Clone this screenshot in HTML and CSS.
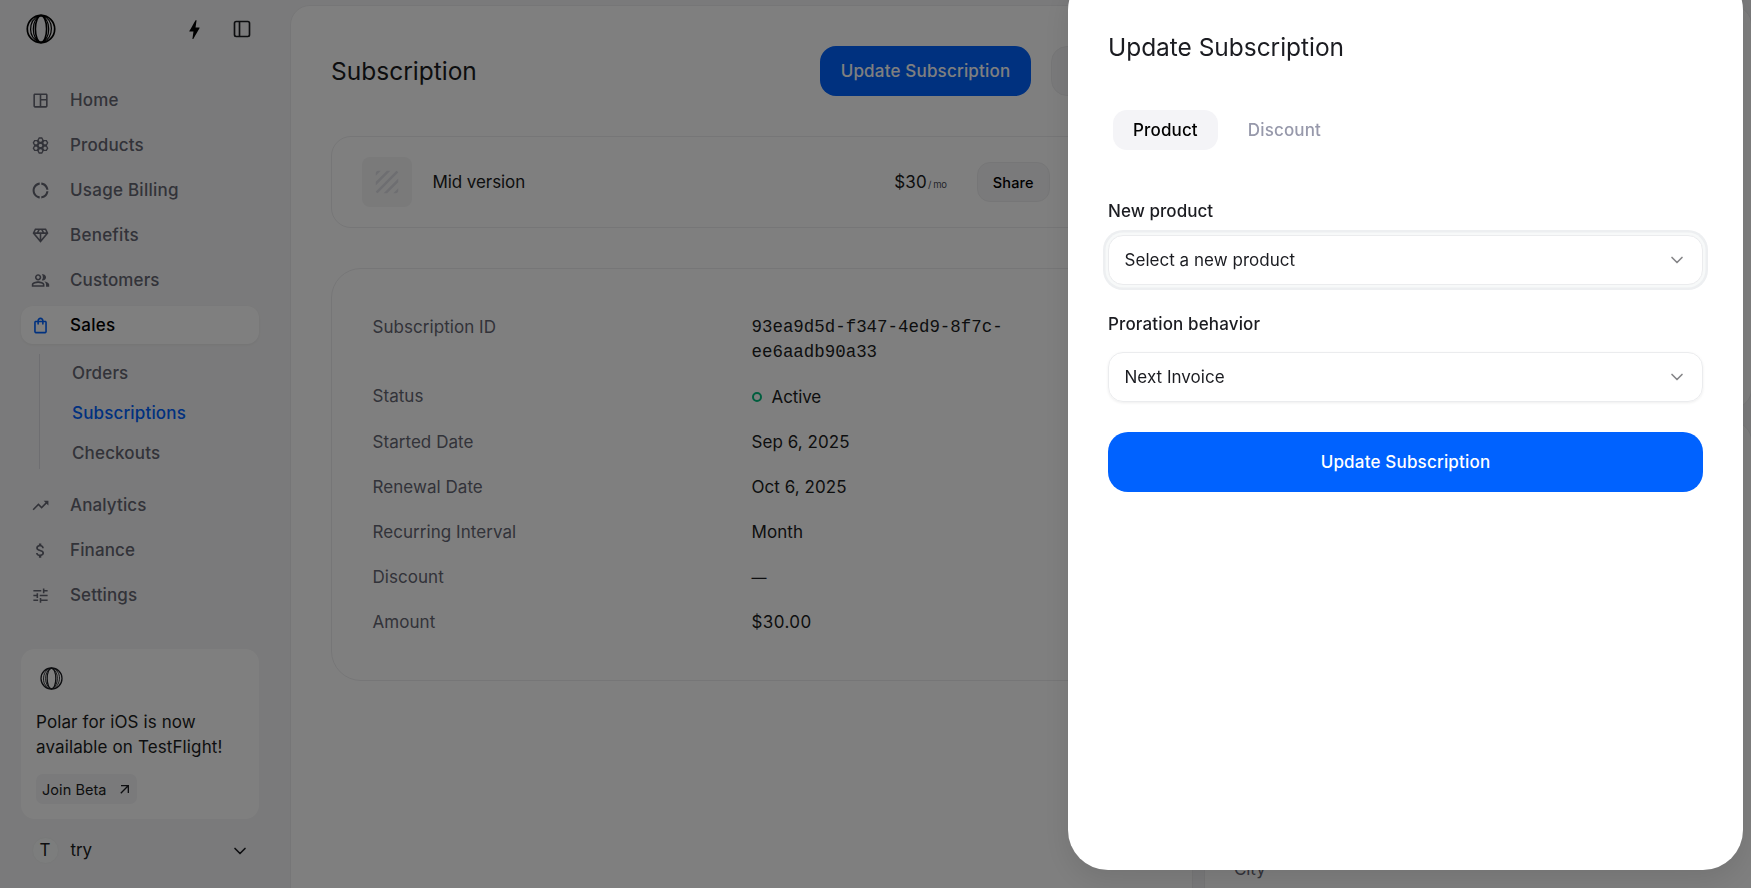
FILE: index.html
```html
<!DOCTYPE html>
<html lang="en">
<head>
<meta charset="utf-8">
<title>Subscription</title>
<link rel="stylesheet" href="styles.css">
</head>
<body>
<svg class="defs" aria-hidden="true">
  <symbol id="logo" viewBox="0 0 30 30">
    <g fill="none" stroke="currentColor">
      <circle cx="15" cy="15" r="13.7" stroke-width="1.7"/>
      <ellipse cx="15" cy="15" rx="5.6" ry="13.6" stroke-width="1.6"/>
      <path d="M13 1.8C7.6 4 4.6 9 4.6 15.600s3.400 10.200 8.400 12.600M15 1.500C10.200 3.600 7.300 8.500 7.300 15S10.200 26.500 15 28.500" stroke-width="1.2"/>
      <path d="M17 1.800C22.400 4 25.400 8.500 25.400 14.400s-3 11.400-8.400 13.800M15 1.500C19.800 3.600 22.700 8.500 22.700 15S19.800 26.500 15 28.500" stroke-width="1.2"/>
    </g>
  </symbol>
  <symbol id="chevron" viewBox="0 0 24 24"><path d="m6 9 6 6 6-6" fill="none" stroke="currentColor" stroke-width="2" stroke-linecap="round" stroke-linejoin="round"/></symbol>
</svg>

<div class="app">
  <aside class="sidebar">
    <header class="side-top">
      <svg class="brand"><use href="#logo"/></svg>
      <div class="side-tools">
        <svg class="bolt" viewBox="0 0 24 24" fill="currentColor"><path d="M11 21h-1l1-7H7.500c-.58 0-.57-.32-.38-.66.19-.34.05-.08.07-.12C8.480 10.940 10.420 7.540 13 3h1l-1 7h3.500c.49 0 .56.33.47.51l-.07.15C12.960 17.550 11 21 11 21z"/></svg>
        <svg class="toggle" viewBox="0 0 24 24" fill="none" stroke="currentColor" stroke-width="2"><rect x="3" y="3" width="18" height="18" rx="2"/><path d="M9 3v18"/></svg>
      </div>
    </header>

    <nav class="nav">
      <a class="nav-item"><svg viewBox="0 0 24 24"><path d="M19 3H5c-1.100 0-2 .9-2 2v14c0 1.100.9 2 2 2h14c1.100 0 2-.9 2-2V5c0-1.100-.9-2-2-2zM5 19V5h6v14H5zm14 0h-6v-7h6v7zm0-9h-6V5h6v5z"/></svg>Home</a>
      <a class="nav-item"><svg class="line" viewBox="0 0 24 24"><path d="M10.400 2.500h3.200l1.600 2.800-1.600 2.800h-3.200L8.800 5.300zM10.400 9.200h3.200l1.600 2.800-1.600 2.800h-3.200L8.800 12zM10.400 15.900h3.200l1.600 2.800-1.600 2.800h-3.200l-1.600-2.800zM4.600 5.800h3.200l1.600 2.800-1.600 2.800H4.600L3 8.600zM4.600 12.600h3.200l1.600 2.800-1.600 2.800H4.600L3 15.400zM16.200 5.800h3.200L21 8.600l-1.600 2.800h-3.200l-1.600-2.800zM16.200 12.600h3.200l1.600 2.800-1.600 2.800h-3.200l-1.600-2.800z"/></svg>Products</a>
      <a class="nav-item wide"><svg viewBox="0 0 24 24"><path d="M11 4.600V2c-5 .5-9 4.810-9 10s4 9.500 9 10v-2.600c-3.500-.48-6.400-3.600-6.400-7.400s2.900-6.920 6.400-7.400zM19.400 11H22c-.47-5-4-8.530-9-9v2.600c3.400.43 5.970 3 6.400 6.400zM13 19.400V22c5-.47 8.530-4 9-9h-2.600c-.43 3.400-3 5.970-6.400 6.400z"/></svg>Usage Billing</a>
      <a class="nav-item wide"><svg viewBox="0 0 24 24"><path d="M19 3H5L2 9l10 12L22 9l-3-6zM9.620 8l1.500-3h1.760l1.500 3H9.620zM11 10v6.680L5.440 10H11zm2 0h5.560L13 16.680V10zm6.260-2h-2.650l-1.500-3h2.650l1.500 3zM6.240 5h2.650l-1.500 3H4.740l1.500-3z"/></svg>Benefits</a>
      <a class="nav-item"><svg viewBox="0 0 24 24"><path d="M16.670 13.130C18.040 14.060 19 15.320 19 17v3h4v-3c0-2.180-3.570-3.470-6.330-3.870zM15 12c2.210 0 4-1.790 4-4s-1.790-4-4-4c-.47 0-.91.1-1.330.24C14.500 5.270 15 6.580 15 8s-.5 2.730-1.330 3.760c.42.14.86.24 1.330.24zM9 12c2.210 0 4-1.790 4-4s-1.790-4-4-4-4 1.790-4 4 1.790 4 4 4zm0-6c1.100 0 2 .9 2 2s-.9 2-2 2-2-.9-2-2 .9-2 2-2zm0 7c-2.670 0-8 1.340-8 4v3h16v-3c0-2.660-5.330-4-8-4zm6 5H3v-.99C3.200 16.290 6.300 15 9 15s5.800 1.290 6 2v1z"/></svg>Customers</a>
      <a class="nav-item wide active"><svg viewBox="0 0 24 24"><path d="M18 6h-2c0-2.210-1.790-4-4-4S8 3.790 8 6H6c-1.100 0-2 .9-2 2v12c0 1.100.9 2 2 2h12c1.100 0 2-.9 2-2V8c0-1.100-.9-2-2-2zm-6-2c1.100 0 2 .9 2 2h-4c0-1.100.9-2 2-2zm6 16H6V8h2v2c0 .55.45 1 1 1s1-.45 1-1V8h4v2c0 .55.45 1 1 1s1-.45 1-1V8h2v12z"/></svg>Sales</a>
      <div class="subnav">
        <a>Orders</a>
        <a class="current">Subscriptions</a>
        <a>Checkouts</a>
      </div>
      <a class="nav-item"><svg viewBox="0 0 24 24"><path d="m16 6 2.290 2.290-4.880 4.880-4-4L2 16.590 3.410 18l6-6 4 4 6.300-6.290L22 12V6z"/></svg>Analytics</a>
      <a class="nav-item"><svg viewBox="0 0 24 24"><path d="M11.800 10.900c-2.270-.59-3-1.200-3-2.150 0-1.090 1.010-1.850 2.700-1.850 1.780 0 2.440.85 2.500 2.100h2.210c-.07-1.720-1.120-3.300-3.210-3.810V3h-3v2.160c-1.940.42-3.500 1.680-3.500 3.610 0 2.310 1.910 3.460 4.700 4.130 2.500.6 3 1.480 3 2.410 0 .69-.49 1.790-2.700 1.790-2.060 0-2.870-.92-2.980-2.100h-2.200c.12 2.190 1.760 3.420 3.680 3.830V21h3v-2.150c1.950-.37 3.500-1.500 3.500-3.550 0-2.840-2.430-3.810-4.700-4.400z"/></svg>Finance</a>
      <a class="nav-item"><svg viewBox="0 0 24 24"><path d="M3 17v2h6v-2H3zM3 5v2h10V5H3zm10 16v-2h8v-2h-8v-2h-2v6h2zM7 9v2H3v2h4v2h2V9H7zm14 4v-2H11v2h10zm-6-4h2V7h4V5h-4V3h-2v6z"/></svg>Settings</a>
    </nav>

    <section class="promo">
      <svg class="promo-logo"><use href="#logo"/></svg>
      <p>Polar for iOS is now available on TestFlight!</p>
      <a class="beta">Join Beta<svg viewBox="0 0 24 24" fill="currentColor"><path d="M6 6v2h8.590L5 17.590 6.410 19 16 9.410V18h2V6z"/></svg></a>
    </section>

    <div class="account">
      <span class="avatar">T</span>
      <span>try</span>
      <svg class="account-chevron"><use href="#chevron"/></svg>
    </div>
  </aside>

  <main class="main">
    <header class="page-head">
      <h1>Subscription</h1>
      <button class="primary">Update Subscription</button>
      <span class="secondary"></span>
    </header>

    <section class="product">
      <span class="thumb"><svg viewBox="0 0 24 24" fill="currentColor"><path d="M19.510 3.080 3.080 19.510c.09.34.27.65.51.9.25.24.56.42.9.51L20.930 4.490c-.19-.69-.73-1.230-1.420-1.410zM11.880 3 3 11.880v2.830L14.710 3h-2.830zM5 3c-1.100 0-2 .9-2 2v2l4-4H5zm14 18c.55 0 1.050-.22 1.410-.59.37-.36.59-.86.59-1.410v-2l-4 4h2zm-9.710 0h2.830L21 12.120V9.290L9.290 21z"/></svg></span>
      <span class="product-name">Mid version</span>
      <span class="price">$30<small>/ mo</small></span>
      <button class="share">Share</button>
    </section>

    <dl class="details">
      <dt>Subscription ID</dt><dd class="mono">93ea9d5d-f347-4ed9-8f7c-ee6aadb90a33</dd>
      <dt class="status-label">Status</dt><dd class="status">Active</dd>
      <dt>Started Date</dt><dd>Sep 6, 2025</dd>
      <dt>Renewal Date</dt><dd>Oct 6, 2025</dd>
      <dt>Recurring Interval</dt><dd>Month</dd>
      <dt>Discount</dt><dd class="dash">—</dd>
      <dt>Amount</dt><dd class="amount">$30.00</dd>
    </dl>
  </main>

  <div class="customer">
    <section class="customer-card"></section>
    <section class="customer-card address"><span>City</span></section>
  </div>
</div>

<div class="overlay"></div>

<section class="drawer">
  <h2>Update Subscription</h2>
  <div class="tabs"><button class="tab selected">Product</button><button class="tab">Discount</button></div>
  <form class="form">
    <span class="label">New product</span>
    <div class="select focused">Select a new product<svg><use href="#chevron"/></svg></div>
    <span class="label second">Proration behavior</span>
    <div class="select">Next Invoice<svg><use href="#chevron"/></svg></div>
    <button class="submit" type="button">Update Subscription</button>
  </form>
</section>
</body>
</html>
```

FILE: styles.css
```css
*, *::before { box-sizing: border-box; }

body {
  margin: 0;
  height: 888px;
  overflow: hidden;
  background: #f5f5f6;
  color: #1b1c21;
  font: 400 17px/25px Inter, "Liberation Sans", sans-serif;
  letter-spacing: 0.06px;
}

h1, h2, p, dl, dd { margin: 0; font-weight: 400; }
button { border: 0; font: inherit; letter-spacing: inherit; }
svg { display: block; flex: none; }
.defs { position: absolute; width: 0; height: 0; }

.app {
  display: grid;
  grid-template-columns: 290px 903px 560px;
  height: 888px;
  overflow: hidden;
}

/* Sidebar */
.sidebar { display: flex; flex-direction: column; padding: 0 31px 0 21px; }
.side-top {
  display: flex;
  align-items: center;
  justify-content: space-between;
  height: 58px;
  padding: 0 7px 0 4.500px;
  color: #000;
}
.brand { width: 30px; height: 30px; }
.side-tools { display: flex; align-items: center; gap: 25px; }
.bolt { width: 25px; height: 25px; }
.toggle { width: 20px; height: 20px; color: #1b1c21; }

.nav { display: flex; flex-direction: column; gap: 7.500px; margin-top: 23.300px; }
.nav-item {
  display: flex;
  align-items: center;
  gap: 20px;
  height: 37.500px;
  padding-left: 10px;
  border-radius: 12px;
  color: #656673;
  font-weight: 500;
  letter-spacing: 0.12px;
}
.nav-item.wide { letter-spacing: 0.25px; }
.nav-item svg { width: 19px; height: 19px; fill: currentColor; }
.nav-item .line { fill: none; stroke: currentColor; stroke-width: 1.700px; }
.nav-item.active { background: #fff; color: #000; box-shadow: 0 1px 3px rgba(0, 0, 0, 0.06); }
.nav-item.active svg { color: #0062ff; }
.subnav {
  display: flex;
  flex-direction: column;
  gap: 5px;
  height: 115px;
  margin: 3.200px 0 9.500px 18px;
  padding: 1.500px 0 0 32px;
  border-left: 1px solid #dcdde2;
}
.subnav a {
  flex: none;
  height: 35px;
  line-height: 35px;
  color: #656673;
  font-weight: 500;
  letter-spacing: 0.15px;
}
.subnav .current { color: #0062ff; }

.promo {
  display: flex;
  flex-direction: column;
  align-items: flex-start;
  height: 170px;
  margin-top: 35.200px;
  padding: 18px 15px 0;
  border-radius: 14px;
  background: #fff;
}
.promo-logo { width: 23px; height: 23px; margin-left: 4px; }
.promo p { margin-top: 20px; letter-spacing: 0.12px; }
.beta {
  display: flex;
  align-items: center;
  gap: 10px;
  height: 30px;
  margin-top: 14px;
  padding: 0 4.500px 0 6px;
  border-radius: 7px;
  background: #f4f4f6;
  font-size: 14.500px;
}
.beta svg { width: 16px; height: 16px; }

.account { display: flex; align-items: center; height: 38px; margin-top: 12.500px; padding: 0 9px 0 10.500px; letter-spacing: -0.1px; }
.avatar {
  width: 27px;
  height: 27px;
  margin-right: 12px;
  border: 1px solid #f0f1f2;
  border-radius: 50%;
  background: #f8fbfa;
  text-align: center;
}
.account-chevron { width: 20px; height: 20px; margin-left: auto; }

/* Main column */
.main {
  height: 920px;
  margin-top: 5px;
  padding: 40px 40px 0;
  border: 1px solid #ededef;
  border-radius: 20px;
  background: #fff;
}
.page-head { display: flex; align-items: center; height: 50px; }
h1 { flex: 1; font-size: 24.500px; line-height: 30px; letter-spacing: 0; }
.primary {
  width: 211px;
  height: 50px;
  border-radius: 16px;
  background: #0062ff;
  color: #fff;
  font-weight: 500;
  letter-spacing: 0.18px;
}
.secondary { width: 101px; height: 50px; margin-left: 20px; border: 1px solid #ededef; border-radius: 16px; background: #f5f5f6; }

.product {
  display: flex;
  align-items: center;
  height: 92px;
  margin-top: 40px;
  padding: 0 101px 0 30px;
  border: 1px solid #ededef;
  border-radius: 20px;
}
.thumb {
  display: grid;
  place-items: center;
  width: 50px;
  height: 50px;
  border-radius: 8px;
  background: #f4f4f5;
  color: #dcdde3;
}
.thumb svg { width: 30px; height: 30px; }
.product-name { flex: 1; padding-left: 20.500px; letter-spacing: -0.08px; }
.price { padding-top: 2px; letter-spacing: 0.2px; }
.price small { margin-left: 1px; color: #4b4c58; font-size: 9.500px; letter-spacing: -0.4px; }
.share {
  width: 73.500px;
  height: 40px;
  margin-left: 30px;
  padding: 0;
  border: 1px solid #ededef;
  border-radius: 13px;
  background: #f5f5f6;
  color: #000;
  font-size: 14.500px;
  font-weight: 500;
  letter-spacing: 0.2px;
}

.details {
  display: grid;
  grid-template-columns: 359px 1fr;
  gap: 20px;
  margin-top: 40px;
  padding: 45.500px 40px;
  border: 1px solid #ededef;
  border-radius: 30px;
}
.details dt { padding-left: 0.500px; color: #656673; letter-spacing: 0.05px; }
.details dd { padding-left: 0.500px; }
.details .status-label { line-height: 23px; }
.details .mono { font: 17.450px/25px "Liberation Mono", monospace; letter-spacing: 0; }
.status { display: flex; align-items: center; gap: 10px; letter-spacing: -0.1px; }
.status::before { content: ""; width: 10px; height: 10px; border: 2.500px solid #00bc7d; border-radius: 50%; }
.dash { font-size: 15px; letter-spacing: 0; }
.amount { letter-spacing: 0.400px; }

/* Customer column */
.customer { display: flex; flex-direction: column; gap: 12.500px; padding: 5px 0 0 11px; }
.customer-card { flex: none; width: 548px; height: 403.500px; border: 1px solid #ededef; border-radius: 20px; background: #fff; }
.customer-card.address { display: flex; align-items: flex-end; height: 500px; padding: 0 29px 38px; color: #656673; letter-spacing: -0.1px; }

/* Drawer */
.overlay { position: fixed; inset: 0; background: rgba(0, 0, 0, 0.5); }
.drawer {
  position: fixed;
  top: -30px;
  right: 8px;
  width: 675px;
  height: 900px;
  padding: 62px 40px 0;
  border-radius: 40px;
  background: #fff;
  box-shadow: 0 10px 30px rgba(0, 0, 0, 0.1);
}
h2 { font-size: 24.500px; line-height: 30px; letter-spacing: -0.04px; }
.tabs { display: flex; gap: 10px; margin-top: 47.500px; padding-left: 5px; }
.tab {
  height: 40px;
  padding: 1px 20px 0;
  border-radius: 14px;
  background: none;
  color: #9799ab;
  font-weight: 500;
  letter-spacing: 0.15px;
}
.tab.selected { background: #f4f4f7; color: #000; }
.form { display: flex; flex-direction: column; margin-top: 49.500px; }
.label { font-weight: 500; }
.label.second { margin-top: 27px; letter-spacing: 0.14px; }
.select {
  display: flex;
  align-items: center;
  justify-content: space-between;
  height: 50px;
  margin-top: 10.500px;
  padding: 0 15.500px;
  border: 1px solid #ebecee;
  border-radius: 15px;
  box-shadow: 0 1px 3px rgba(0, 0, 0, 0.07);
  letter-spacing: 0.03px;
}
.select.focused { padding-top: 1px; box-shadow: 0 0 0 2.500px #f7f9f9, 0 0 0 5px #edeff1; }
.label.second + .select { margin-top: 15.500px; }
.select svg { width: 20px; height: 20px; color: #858588; }
.submit {
  height: 60px;
  margin-top: 30px;
  border-radius: 20px;
  background: #0062ff;
  color: #fff;
  font-weight: 500;
  letter-spacing: 0.18px;
}
```
